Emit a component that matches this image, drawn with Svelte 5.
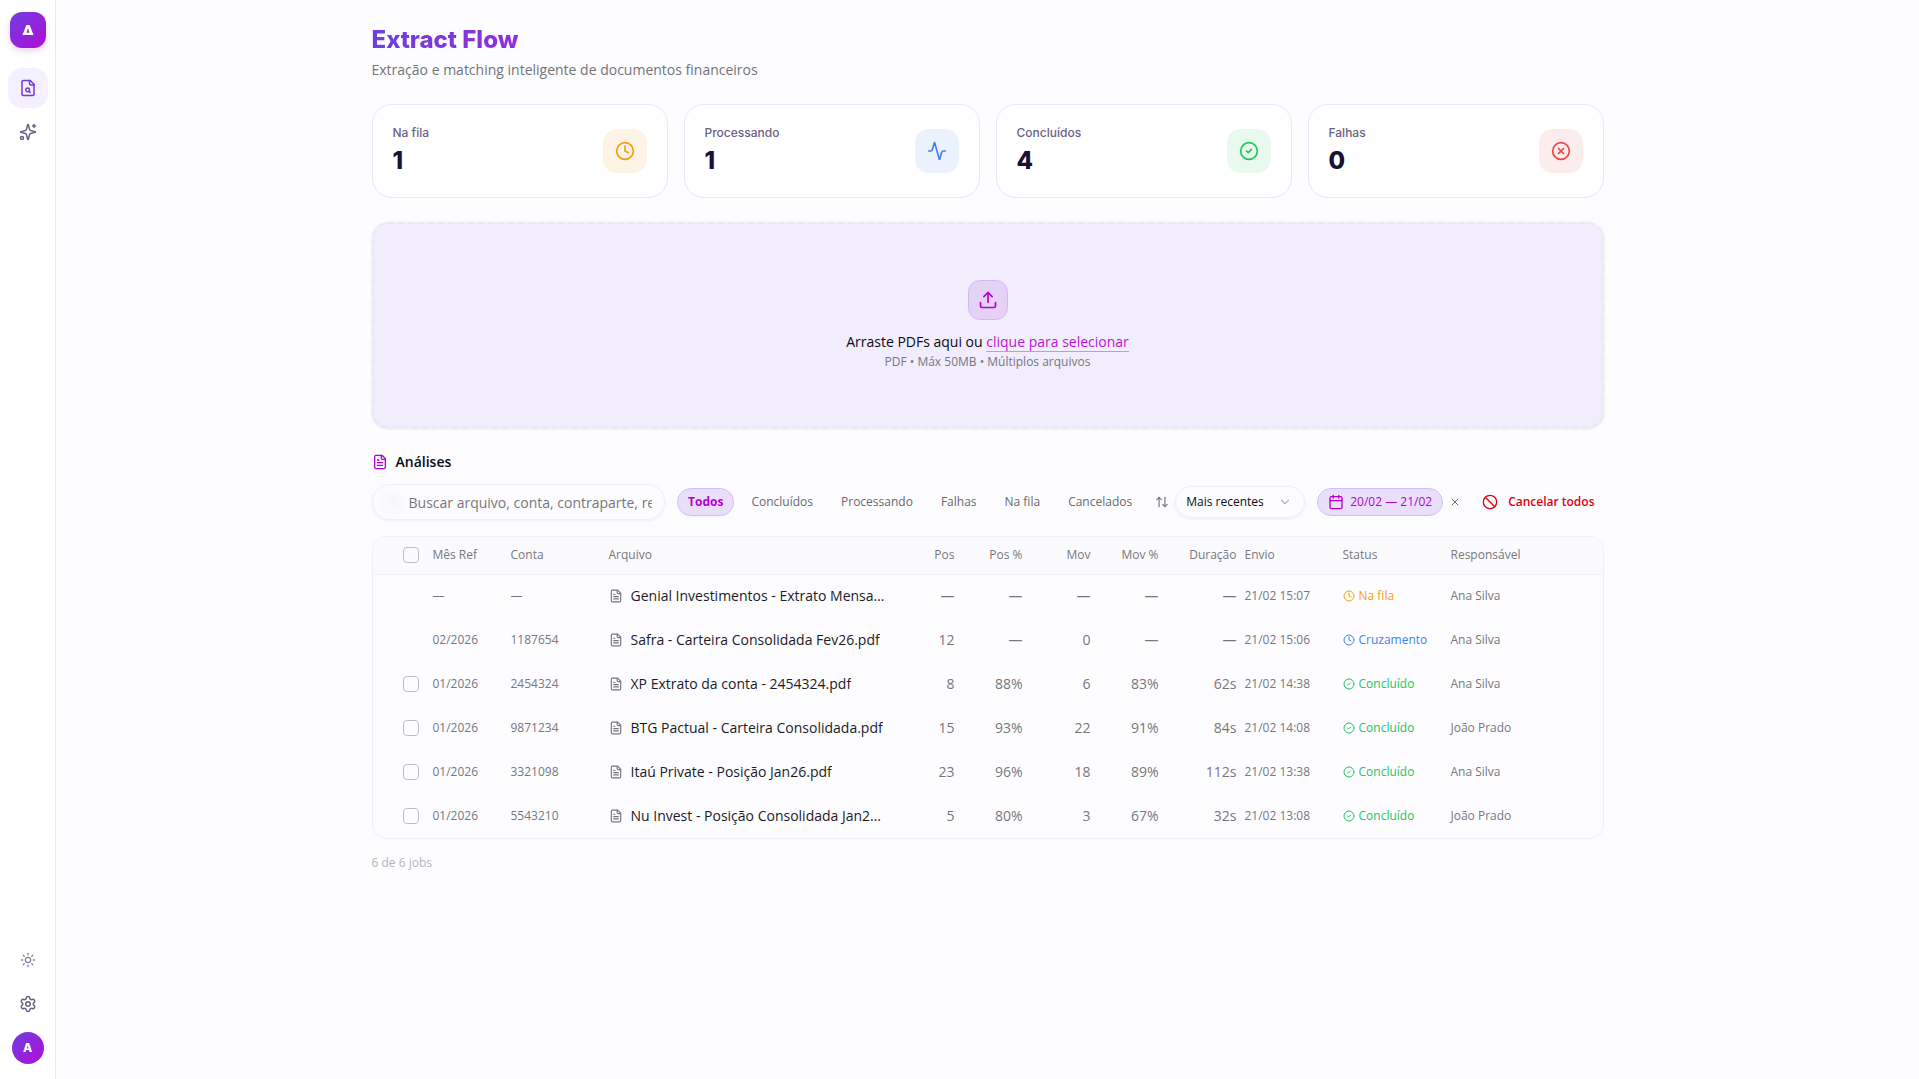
<script>
  const stats = [
    { label: 'Na fila', value: 1, icon: 'clock', tone: 'amber' },
    { label: 'Processando', value: 1, icon: 'activity', tone: 'blue' },
    { label: 'Concluídos', value: 4, icon: 'check', tone: 'green' },
    { label: 'Falhas', value: 0, icon: 'x', tone: 'red' }
  ];
  const filters = ['Todos', 'Concluídos', 'Processando', 'Falhas', 'Na fila', 'Cancelados'];
  let active = $state('Todos');
  const rows = [
    { ref: '—', acc: '—', file: 'Genial Investimentos - Extrato Mensal Fev26.pdf', n: ['—', '—', '—', '—', '—'], sent: '21/02 15:07', status: 'Na fila', tone: 'amber', icon: 'clock', who: 'Ana Silva', pick: false },
    { ref: '02/2026', acc: '1187654', file: 'Safra - Carteira Consolidada Fev26.pdf', n: ['12', '—', '0', '—', '—'], sent: '21/02 15:06', status: 'Cruzamento', tone: 'blue', icon: 'clock', who: 'Ana Silva', pick: false },
    { ref: '01/2026', acc: '2454324', file: 'XP Extrato da conta - 2454324.pdf', n: ['8', '88%', '6', '83%', '62s'], sent: '21/02 14:38', status: 'Concluído', tone: 'green', icon: 'check', who: 'Ana Silva', pick: true },
    { ref: '01/2026', acc: '9871234', file: 'BTG Pactual - Carteira Consolidada.pdf', n: ['15', '93%', '22', '91%', '84s'], sent: '21/02 14:08', status: 'Concluído', tone: 'green', icon: 'check', who: 'João Prado', pick: true },
    { ref: '01/2026', acc: '3321098', file: 'Itaú Private - Posição Jan26.pdf', n: ['23', '96%', '18', '89%', '112s'], sent: '21/02 13:38', status: 'Concluído', tone: 'green', icon: 'check', who: 'Ana Silva', pick: true },
    { ref: '01/2026', acc: '5543210', file: 'Nu Invest - Posição Consolidada Jan26.pdf', n: ['5', '80%', '3', '67%', '32s'], sent: '21/02 13:08', status: 'Concluído', tone: 'green', icon: 'check', who: 'João Prado', pick: true }
  ];
  const icons = {
    clock: ['M22 12a10 10 0 1 1-20 0 10 10 0 0 1 20 0', 'M12 6v6l4 2'],
    activity: ['M22 12h-2.48a2 2 0 0 0-1.93 1.46l-2.35 8.36a.25.25 0 0 1-.48 0L9.24 2.18a.25.25 0 0 0-.48 0l-2.35 8.36A2 2 0 0 1 4.49 12H2'],
    check: ['M22 12a10 10 0 1 1-20 0 10 10 0 0 1 20 0', 'm9 12 2 2 4-4'],
    x: ['M22 12a10 10 0 1 1-20 0 10 10 0 0 1 20 0', 'm15 9-6 6', 'm9 9 6 6'],
    upload: ['M12 3v12', 'm17 8-5-5-5 5', 'M21 15v4a2 2 0 0 1-2 2H5a2 2 0 0 1-2-2v-4'],
    file: ['M15 2H6a2 2 0 0 0-2 2v16a2 2 0 0 0 2 2h12a2 2 0 0 0 2-2V7Z', 'M14 2v4a2 2 0 0 0 2 2h4', 'M10 9H8', 'M16 13H8', 'M16 17H8'],
    search: ['M15 2H6a2 2 0 0 0-2 2v16a2 2 0 0 0 2 2h12a2 2 0 0 0 2-2V7Z', 'M14 2v4a2 2 0 0 0 2 2h4', 'M14 14.5a2.5 2.5 0 1 1-5 0 2.5 2.5 0 0 1 5 0', 'M13.3 16.3 15 18'],
    sparkles: ['M9.937 15.5A2 2 0 0 0 8.5 14.063l-6.135-1.582a.5.5 0 0 1 0-.962L8.5 9.936A2 2 0 0 0 9.937 8.5l1.582-6.135a.5.5 0 0 1 .963 0L14.063 8.5A2 2 0 0 0 15.5 9.937l6.135 1.581a.5.5 0 0 1 0 .964L15.5 14.063a2 2 0 0 0-1.437 1.437l-1.582 6.135a.5.5 0 0 1-.963 0z', 'M20 2v4', 'M22 4h-4', 'M6 20a2 2 0 1 1-4 0 2 2 0 0 1 4 0'],
    sun: ['M16 12a4 4 0 1 1-8 0 4 4 0 0 1 8 0', 'M12 2v2', 'M12 20v2', 'm4.93 4.93 1.41 1.41', 'm17.66 17.66 1.41 1.41', 'M2 12h2', 'M20 12h2', 'm6.34 17.66-1.41 1.41', 'm19.07 4.93-1.41 1.41'],
    gear: ['M9.671 4.136a2.34 2.34 0 0 1 4.659 0 2.34 2.34 0 0 0 3.319 1.915 2.34 2.34 0 0 1 2.33 4.033 2.34 2.34 0 0 0 0 3.831 2.34 2.34 0 0 1-2.33 4.033 2.34 2.34 0 0 0-3.319 1.915 2.34 2.34 0 0 1-4.659 0 2.34 2.34 0 0 0-3.32-1.915 2.34 2.34 0 0 1-2.33-4.033 2.34 2.34 0 0 0 0-3.831A2.34 2.34 0 0 1 6.35 6.051a2.34 2.34 0 0 0 3.319-1.915', 'M15 12a3 3 0 1 1-6 0 3 3 0 0 1 6 0'],
    sort: ['m3 8 4-4 4 4', 'M7 4v16', 'm21 16-4 4-4-4', 'M17 20V4'],
    chevron: ['m6 9 6 6 6-6'],
    calendar: ['M8 2v4', 'M16 2v4', 'M5 4h14a2 2 0 0 1 2 2v14a2 2 0 0 1-2 2H5a2 2 0 0 1-2-2V6a2 2 0 0 1 2-2z', 'M3 10h18'],
    ban: ['M22 12a10 10 0 1 1-20 0 10 10 0 0 1 20 0', 'm4.9 4.9 14.2 14.2'],
    close: ['M18 6 6 18', 'm6 6 12 12']
  };
</script>

{#snippet icon(name, size)}
  <svg width={size} height={size} viewBox="0 0 24 24" aria-hidden="true">
    {#each icons[name] as d}<path {d} />{/each}
  </svg>
{/snippet}

<div class="app">
  <aside>
    <div class="logo">
      <svg class="mark" width="12" height="12" viewBox="0 0 12 12" aria-hidden="true">
        <path d="M4.3 1h3.400L11.500 11H0.500z M6 4 4.600 8.800h2.800z" fill-rule="evenodd" />
      </svg>
    </div>
    <nav aria-label="Principal">
      <a href="#extract" class="current" aria-label="Extract Flow">{@render icon('search', 18)}</a>
      <a href="#assistant" aria-label="Assistente">{@render icon('sparkles', 18)}</a>
    </nav>
    <div class="bottom">
      <button class="side sun" aria-label="Tema">{@render icon('sun', 16)}</button>
      <button class="side" aria-label="Configurações">{@render icon('gear', 18)}</button>
      <button class="avatar" aria-label="Perfil">A</button>
    </div>
  </aside>

  <main>
    <div class="container">
      <header>
        <h1>Extract Flow</h1>
        <p>Extração e matching inteligente de documentos financeiros</p>
      </header>

      <section class="stats">
        {#each stats as s}
          <article>
            <div>
              <h2>{s.label}</h2>
              <strong>{s.value}</strong>
            </div>
            <span class="badge {s.tone}">{@render icon(s.icon, 20)}</span>
          </article>
        {/each}
      </section>

      <section class="drop">
        <span class="up">{@render icon('upload', 20)}</span>
        <p class="lead">Arraste PDFs aqui ou <button>clique para selecionar</button></p>
        <p class="hint">PDF • Máx 50MB • Múltiplos arquivos</p>
      </section>

      <h2 class="title">{@render icon('file', 16)} Análises</h2>

      <div class="toolbar">
        <input class="search" type="text" aria-label="Buscar" placeholder="Buscar arquivo, conta, contraparte, responsável" />
        <div class="filters">
          {#each filters as f}
            <button class:on={active === f} onclick={() => (active = f)}>{f}</button>
          {/each}
        </div>
        <div class="sort">
          {@render icon('sort', 14)}
          <label class="select">
            <select aria-label="Ordenar"><option>Mais recentes</option><option>Mais antigos</option></select>
            {@render icon('chevron', 14)}
          </label>
        </div>
        <div class="dates">
          <button class="range">{@render icon('calendar', 16)}20/02 — 21/02</button>
          <button class="clear" aria-label="Limpar datas">{@render icon('close', 12)}</button>
        </div>
        <button class="cancel">{@render icon('ban', 16)}Cancelar todos</button>
      </div>

      <div class="tablebox">
        <table>
          <colgroup>
            <col class="c-pick" /><col class="c-ref" /><col class="c-acc" /><col class="c-file" />
            <col class="c-num" /><col class="c-num" /><col class="c-num" /><col class="c-num" /><col class="c-dur" />
            <col class="c-sent" /><col class="c-status" /><col />
          </colgroup>
          <thead>
            <tr>
              <th class="pick"><input type="checkbox" aria-label="Selecionar todos" /></th>
              <th>Mês Ref</th><th>Conta</th><th>Arquivo</th>
              <th class="num">Pos</th><th class="num">Pos %</th><th class="num">Mov</th><th class="num">Mov %</th><th class="num">Duração</th>
              <th>Envio</th><th>Status</th><th>Responsável</th>
            </tr>
          </thead>
          <tbody>
            {#each rows as r}
              <tr>
                <td class="pick">{#if r.pick}<input type="checkbox" aria-label="Selecionar {r.file}" />{/if}</td>
                <td>{r.ref}</td>
                <td>{r.acc}</td>
                <td><div class="file">{@render icon('file', 14)}<span>{r.file}</span></div></td>
                {#each r.n as v}<td class="num">{v}</td>{/each}
                <td>{r.sent}</td>
                <td><span class="status {r.tone}">{@render icon(r.icon, 12)}{r.status}</span></td>
                <td>{r.who}</td>
              </tr>
            {/each}
          </tbody>
        </table>
      </div>
      <p class="count">6 de 6 jobs</p>
    </div>
  </main>
</div>

<style>
  :global(body) {
    margin: 0;
    background: #fdfdff;
  }
  * {
    box-sizing: border-box;
  }
  .app {
    display: flex;
    min-height: 100vh;
    font: 14px/20px 'Open Sans', 'Noto Sans', sans-serif;
    color: #0b0b14;
  }
  h1,
  h2,
  p {
    margin: 0;
  }
  svg {
    flex: none;
    fill: none;
    stroke: currentColor;
    stroke-width: 2;
    stroke-linecap: round;
    stroke-linejoin: round;
  }
  button {
    font: inherit;
    color: inherit;
    border: 0;
    padding: 0;
    background: none;
    cursor: pointer;
  }
  aside {
    position: sticky;
    top: 0;
    width: 56px;
    height: 100vh;
    padding: 12px 0 15px;
    flex: none;
    display: flex;
    flex-direction: column;
    align-items: center;
    background: #fff;
    border-right: 1px solid #e0e7f6;
    color: #6b5f85;
  }
  .logo {
    width: 36px;
    height: 36px;
    border-radius: 12px;
    display: grid;
    place-items: center;
    background: linear-gradient(135deg, #6d3fe0, #b30bd6);
    box-shadow: 0 3px 6px #a21caf33;
  }
  .mark {
    fill: #fff;
    stroke: none;
  }
  nav {
    margin-top: 20px;
  }
  nav,
  .bottom {
    display: flex;
    flex-direction: column;
    align-items: center;
    gap: 4px;
  }
  .bottom {
    margin-top: auto;
  }
  nav a,
  .side {
    width: 40px;
    height: 40px;
    display: grid;
    place-items: center;
    border-radius: 14px;
    color: inherit;
  }
  nav .current {
    background: #f4f0ff;
    color: #7239dc;
  }
  .sun {
    color: #8a809e;
  }
  .avatar {
    width: 32px;
    height: 32px;
    margin-top: 4px;
    border-radius: 50%;
    background: linear-gradient(135deg, #6d3fe0, #b30bd6);
    color: #fff;
    font: 800 12px/16px Inter, sans-serif;
  }
  main {
    flex: 1;
    min-width: 0;
  }
  .container {
    max-width: 1280px;
    margin: 0 auto;
    padding: 24px;
  }
  h1 {
    width: fit-content;
    font: 800 24px/32px Inter, sans-serif;
    background: linear-gradient(90deg, #6d3fe0, #8f2fda);
    background-clip: text;
    color: transparent;
  }
  header p {
    margin-top: 4px;
    color: #737378;
  }
  .stats {
    display: grid;
    grid-template-columns: repeat(4, 1fr);
    gap: 16px;
    margin-top: 24px;
  }
  article {
    display: flex;
    justify-content: space-between;
    align-items: center;
    height: 94px;
    padding: 0 20px;
    background: #fff;
    border: 1px solid #e4e9fb;
    border-radius: 20px;
  }
  article h2 {
    font: 500 12px/16px Inter, sans-serif;
    color: #6b5f85;
  }
  article strong {
    display: block;
    margin-top: 4px;
    font: 800 24px/32px Inter, sans-serif;
    color: #1a1033;
  }
  .badge {
    width: 44px;
    height: 44px;
    display: grid;
    place-items: center;
    border-radius: 14px;
  }
  .amber {
    color: #f59e0b;
  }
  .blue {
    color: #3b82f6;
  }
  .green {
    color: #22c55e;
  }
  .red {
    color: #ef4444;
  }
  .badge.amber {
    background: #fef4e6;
  }
  .badge.blue {
    background: #ebf2fe;
  }
  .badge.green {
    background: #e8f9ee;
  }
  .badge.red {
    background: #fdecec;
  }
  .drop {
    margin-top: 24px;
    padding: 56px 20px;
    display: flex;
    flex-direction: column;
    align-items: center;
    background: #f2edfc;
    border: 2px dashed #ebe8f2;
    border-radius: 16px;
    box-shadow: 0 1px 3px #0000001a;
  }
  .up {
    width: 40px;
    height: 40px;
    display: grid;
    place-items: center;
    border: 1px solid #d3b8f3;
    border-radius: 12px;
    background: linear-gradient(135deg, #e2d5f8, #e9cff5);
    color: #b400d2;
  }
  .lead {
    margin-top: 12px;
    font-weight: 500;
  }
  .lead button {
    color: #b814d8;
    border-bottom: 1px solid #d88bea;
    line-height: 18px;
  }
  .hint {
    margin-top: 2px;
    font-size: 12px;
    line-height: 16px;
    color: #77757f;
  }
  .title {
    display: flex;
    align-items: center;
    gap: 8px;
    margin-top: 24px;
    font-size: 14px;
    line-height: 20px;
    font-weight: 600;
  }
  .title svg {
    color: #b400d2;
  }
  .toolbar {
    display: flex;
    align-items: center;
    gap: 12px;
    margin-top: 12px;
    font-size: 12px;
    line-height: 16px;
    white-space: nowrap;
  }
  .search {
    flex: 1;
    min-width: 0;
    height: 36px;
    padding: 0 12px 0 36px;
    border: 1px solid #f0f0f4;
    border-radius: 18px;
    background: radial-gradient(circle at 20px 17px, #f7f7f9, #fdfdff 18px);
    box-shadow: 0 1px 3px #00000010;
    font: 14px/20px 'Open Sans', 'Noto Sans', sans-serif;
  }
  .search::placeholder {
    color: #77777c;
    opacity: 1;
  }
  .filters {
    display: flex;
    gap: 6px;
  }
  .filters button {
    height: 28px;
    padding: 0 10px;
    border: 1px solid transparent;
    border-radius: 14px;
    color: #68686d;
    font-weight: 500;
  }
  .filters .on {
    color: #b400d2;
    background: #e9dffa;
    border-color: #d3c0f3;
    font-weight: 700;
    box-shadow: 0 1px 2px #0000000d;
  }
  .sort {
    display: flex;
    align-items: center;
    gap: 6px;
    color: #77777c;
  }
  .select {
    display: flex;
    align-items: center;
    width: 130px;
    height: 32px;
    padding: 0 12px 0 10px;
    border: 1px solid #f0f0f4;
    border-radius: 16px;
    box-shadow: 0 1px 3px #00000012;
    color: #b4b4b8;
  }
  .select select {
    flex: 1;
    min-width: 0;
    appearance: none;
    border: 0;
    padding: 0;
    background: none;
    font: 500 12px/16px 'Open Sans', 'Noto Sans', sans-serif;
    color: #0b0b14;
  }
  .dates {
    display: flex;
    align-items: center;
    gap: 6px;
  }
  .range {
    display: flex;
    align-items: center;
    gap: 6px;
    height: 28px;
    padding: 0 10px;
    border: 1px solid #d3c0f3;
    border-radius: 14px;
    background: #e9dffa;
    color: #b400d2;
  }
  .clear {
    display: grid;
    color: #68686d;
  }
  .cancel {
    display: flex;
    align-items: center;
    gap: 10px;
    padding: 0 9px;
    color: #e00010;
    font-weight: 600;
  }
  .tablebox {
    margin-top: 16px;
    border: 1px solid #f0f0f4;
    border-radius: 14px;
    overflow: hidden;
  }
  table {
    width: 100%;
    table-layout: fixed;
    border-collapse: collapse;
    font-size: 12px;
    line-height: 16px;
    color: #77777c;
  }
  .c-pick {
    width: 56px;
  }
  .c-ref {
    width: 78px;
  }
  .c-acc {
    width: 98px;
  }
  .c-file {
    width: 286px;
  }
  .c-num {
    width: 68px;
  }
  .c-dur {
    width: 78px;
  }
  .c-sent {
    width: 98px;
  }
  .c-status {
    width: 108px;
  }
  th,
  td {
    padding: 0 4px;
    text-align: left;
    font-weight: 400;
    white-space: nowrap;
  }
  th {
    height: 37px;
    background: #fbfbfe;
    border-bottom: 1px solid #f0f0f4;
    font-weight: 500;
  }
  td {
    height: 44px;
  }
  .num {
    text-align: right;
  }
  td.num {
    font-size: 14px;
  }
  .pick {
    padding: 0 8px 0 30px;
  }
  .pick input {
    appearance: none;
    display: block;
    width: 16px;
    height: 16px;
    margin: 0;
    border: 1px solid #bdbdc2;
    border-radius: 4px;
  }
  .file {
    display: flex;
    align-items: center;
    gap: 8px;
  }
  .file span {
    max-width: 256px;
    overflow: hidden;
    text-overflow: ellipsis;
    font-size: 14px;
    line-height: 20px;
    color: #1c1a26;
  }
  .status {
    display: flex;
    align-items: center;
    gap: 4px;
    font-weight: 500;
  }
  .count {
    margin-top: 16px;
    font-size: 12px;
    line-height: 16px;
    color: #b4b4b8;
  }
</style>
